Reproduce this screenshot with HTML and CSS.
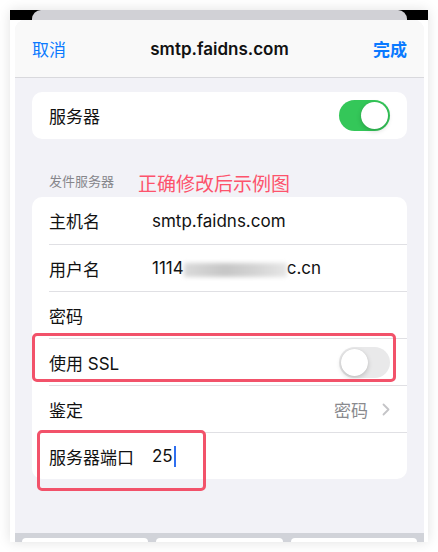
FILE: index.html
```html
<!DOCTYPE html>
<html lang="zh-CN">
<head>
    <meta charset="UTF-8">
    <title>smtp.faidns.com</title>
    <link rel="stylesheet" href="styles.css">
</head>
<body>
<div class="frame">
    <div class="status">
        <div class="back-card"></div>
    </div>
    <div class="sheet">
        <div class="nav">
            <a class="nav-btn" href="#">取消</a>
            <div class="nav-title">smtp.faidns.com</div>
            <a class="nav-btn done" href="#">完成</a>
        </div>
        <div class="content">
            <div class="group">
                <div class="row">
                    <div class="row-inner">
                        <span class="label">服务器</span>
                        <span class="switch on"><i></i></span>
                    </div>
                </div>
            </div>

            <div class="section-head">
                <span>发件服务器</span>
                <span class="note">正确修改后示例图</span>
            </div>
            <div class="group">
                <div class="row">
                    <div class="row-inner">
                        <span class="label">主机名</span>
                        <span class="value">smtp.faidns.com</span>
                    </div>
                </div>
                <div class="row">
                    <div class="row-inner">
                        <span class="label">用户名</span>
                        <span class="value">1114<span class="blur"></span>c.cn</span>
                    </div>
                </div>
                <div class="row">
                    <div class="row-inner">
                        <span class="label">密码</span>
                    </div>
                </div>
                <div class="row">
                    <div class="row-inner">
                        <span class="label">使用 SSL</span>
                        <span class="switch"><i></i></span>
                    </div>
                </div>
                <div class="row">
                    <div class="row-inner">
                        <span class="label">鉴定</span>
                        <span class="detail">密码
                            <svg class="chevron" width="8" height="13" viewBox="0 0 8 13"><path d="M1.5 1.5 L6.5 6.5 L1.5 11.5" fill="none" stroke="#c4c4c7" stroke-width="1.8" stroke-linecap="round" stroke-linejoin="round"/></svg>
                        </span>
                    </div>
                </div>
                <div class="row">
                    <div class="row-inner">
                        <span class="label">服务器端口</span>
                        <span class="value">25<i class="caret"></i></span>
                    </div>
                </div>
            </div>
        </div>
        <div class="keyboard">
            <span class="key"></span>
            <span class="key"></span>
            <span class="key"></span>
        </div>
    </div>
    <!-- 标注框 -->
    <div class="mark mark-ssl"></div>
    <div class="mark mark-port"></div>
</div>
</body>
</html>
```

FILE: styles.css
```css
html,body{
    margin: 0;
    padding: 0;
    background-color: #fff;
    font-family: Inter, "Noto Sans CJK SC", sans-serif;
}
a{
    text-decoration: none;
}
.frame{
    position: relative;
    width: 418px;
    height: 532px;
    margin: 10px;
    background-color: #fff;
    box-shadow: 0 0 12px rgba(0,0,0,.12);
    display: flex;
    flex-direction: column;
    overflow: hidden;
}
.status{
    height: 10px;
    background-color: #000;
    padding: 0 21px 0 22px;
}
.back-card{
    height: 10px;
    background-color: #d1d1d6;
    border-radius: 9px 9px 0 0;
}
.sheet{
    flex: 1;
    margin: 0 4px 0 5px;
    background-color: #f2f2f7;
    border-radius: 10px 10px 0 0;
    overflow: hidden;
    display: flex;
    flex-direction: column;
}
.nav{
    height: 57px;
    background-color: #f9f9f9;
    border-bottom: 1px solid #d9d9dd;
    display: flex;
    align-items: center;
    justify-content: space-between;
    padding: 0 17px;
}
.nav-btn{
    color: #0a7aff;
    font-size: 17px;
    font-family: "Noto Sans CJK SC", sans-serif;
}
.nav-btn.done{
    font-weight: 600;
}
.nav-title{
    font-size: 17px;
    font-weight: 600;
    color: #111;
}
.content{
    flex: 1;
    padding: 14px 17px 0 17px;
}
.group{
    background-color: #fff;
    border-radius: 10px;
    overflow: hidden;
}
.row{
    padding-left: 17px;
}
.row-inner{
    height: 47px;
    display: flex;
    align-items: center;
    padding-right: 17px;
    font-size: 17px;
    color: #111;
}
.row + .row .row-inner{
    height: 46px;
    border-top: 1px solid #e0e0e4;
}
.label{
    width: 103px;
    flex-shrink: 0;
}
.value{
    display: flex;
    align-items: center;
}
.blur{
    display: inline-block;
    width: 103px;
    height: 14px;
    margin-top: 3px;
    background: linear-gradient(90deg,#dadada,#c6c6c6 40%,#d4d4d4 70%,#e6e6e6);
    filter: blur(2px);
}
.caret{
    display: inline-block;
    width: 2px;
    height: 21px;
    margin-left: 1px;
    background-color: #2f6ff0;
}
.switch{
    margin-left: auto;
    width: 51px;
    height: 31px;
    border-radius: 16px;
    background-color: #e9e9ea;
    position: relative;
}
.switch i{
    position: absolute;
    top: 2px;
    left: 2px;
    width: 27px;
    height: 27px;
    border-radius: 50%;
    background-color: #fff;
    box-shadow: 0 2px 5px rgba(0,0,0,.18), 0 0 1px rgba(0,0,0,.1);
}
.switch.on{
    background-color: #34c759;
}
.switch.on i{
    left: 22px;
}
.detail{
    margin-left: auto;
    color: #8a8a8e;
    display: flex;
    align-items: center;
    gap: 14px;
}
.section-head{
    height: 58px;
    box-sizing: border-box;
    padding: 0 0 7px 17px;
    display: flex;
    align-items: flex-end;
    font-size: 13px;
    color: #86868b;
}
.section-head .note{
    margin-left: 24px;
    margin-bottom: -6px;
    font-size: 19px;
    color: #fd536c;
}
.keyboard{
    height: 9px;
    background-color: #d1d3d9;
    display: flex;
    gap: 8px;
    padding: 5px 7px 0 7px;
    box-sizing: border-box;
}
.key{
    flex: 1;
    background-color: #fff;
    border-radius: 5px 5px 0 0;
}
.mark{
    position: absolute;
    border: 3px solid #f2526a;
    border-radius: 5px;
}
.mark-ssl{
    left: 22px;
    top: 323px;
    width: 358px;
    height: 43px;
}
.mark-port{
    left: 27px;
    top: 420px;
    width: 163px;
    height: 55px;
}
```
